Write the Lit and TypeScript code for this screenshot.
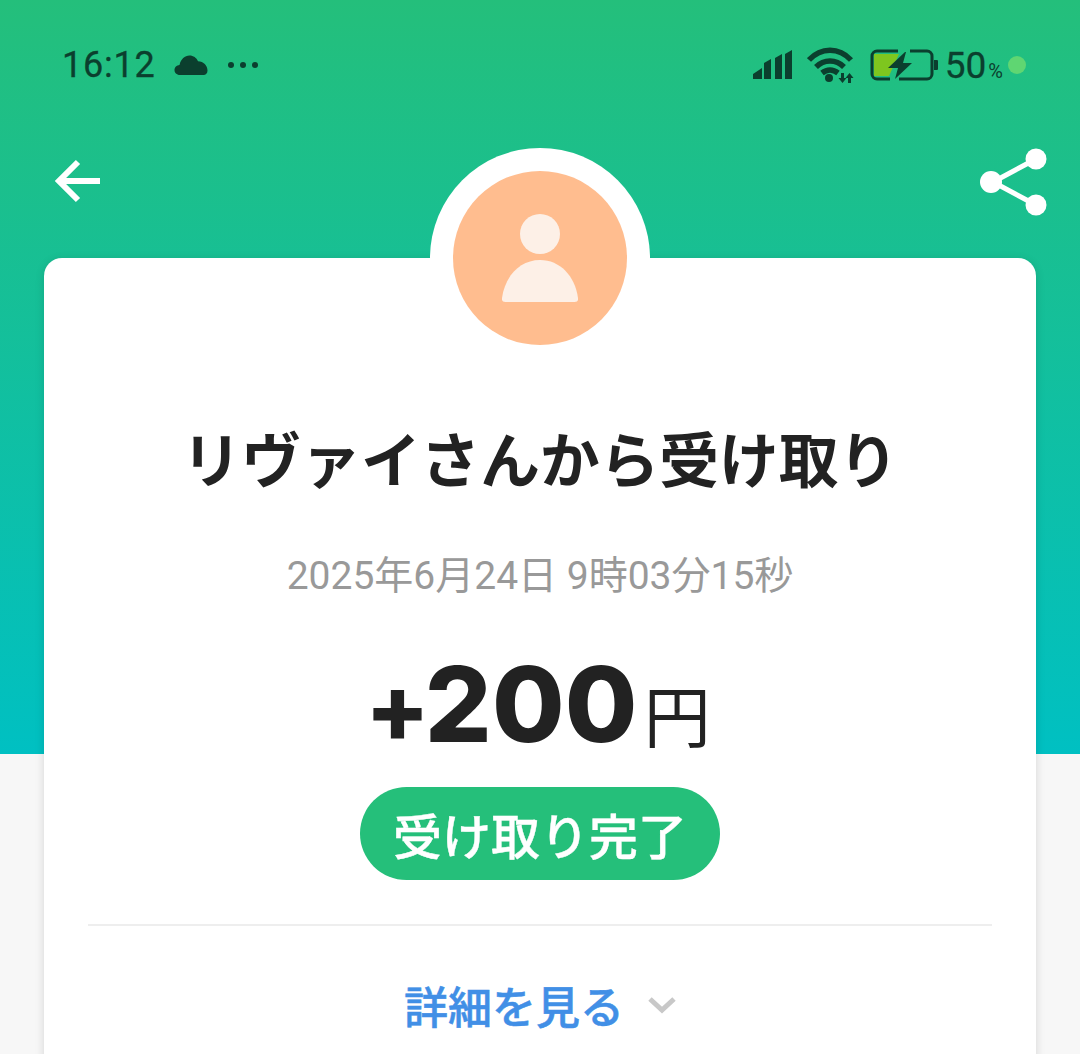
import { LitElement, html, css, svg } from "lit";
import { customElement } from "lit/decorators.js";

const DARK = "#0b3f2e";

@customElement("status-bar")
class StatusBar extends LitElement {
  static styles = css`
    :host { display: flex; align-items: center; height: 130px; padding: 0 54px 0 62px; box-sizing: border-box; color: #0b3f2e; font-family: Roboto, "Liberation Sans", sans-serif; }
    .time { font-size: 36px; letter-spacing: 0.8px; line-height: 1; -webkit-text-stroke: 0.3px currentColor; }
    svg { display: block; flex: none; }
    .cloud { margin-left: 18px; }
    .dots { margin-left: 19px; }
    .spacer { flex: 1; }
    .wifi { margin-left: 14px; }
    .batt { margin-left: 15px; }
    .pct { margin-left: 7px; font-size: 37px; line-height: 1; display: flex; align-items: baseline; -webkit-text-stroke: 0.3px currentColor; }
    .pct small { font-size: 20px; margin-left: 2px; -webkit-text-stroke: 0; }
    .dot { width: 18px; height: 18px; border-radius: 50%; background: #5fd672; margin-left: 5px; }
  `;
  render() {
    return html`
      <span class="time">16:12</span>
      <svg class="cloud" width="34" height="20" viewBox="0 0 34 20"><path fill="${DARK}" d="M6 20C2.500 20 .5 17.600.5 15c0-2.800 2.200-4.900 5-5.100C6.800 4.200 10.800.5 15.500.5c3.900 0 7 2.200 8.500 5.800C29.500 6.300 33.500 10.800 33.500 15.500c0 2.800-1.700 4.500-4 4.500Z"/></svg>
      <svg class="dots" width="32" height="8" viewBox="0 0 32 8"><circle cx="4" cy="4" r="3" fill="${DARK}"/><circle cx="16" cy="4" r="3" fill="${DARK}"/><circle cx="28" cy="4" r="3" fill="${DARK}"/></svg>
      <span class="spacer"></span>
      <svg width="40" height="30" viewBox="0 0 40 30"><path fill="${DARK}" d="M0 29v-5l9-6v11ZM11 29V13l7-4v20ZM22 29V8l7-4v25ZM32 29V4l7-4v29Z"/></svg>
      <svg class="wifi" width="48" height="36" viewBox="0 0 48 36" fill="none" stroke="${DARK}" stroke-width="5.500"><path d="M2 13C14 0 32 0 44 13"/><path d="M9 20c8-8 20-8 28 0"/><path d="M15 26c5-4 11-4 16 0"/><circle cx="22" cy="31" r="4" fill="${DARK}" stroke="none"/><path stroke="none" fill="${DARK}" d="M34 26h3v5h2.500l-4 5-4-5H34ZM41 36h3v-5h2.500l-4-5-4 5H41Z"/></svg>
      <svg class="batt" width="68" height="32" viewBox="0 0 68 32"><path fill="#7ec61f" d="M4 5h25L19 27H4Z"/><path fill="none" stroke="${DARK}" stroke-width="3" d="M20 30H7a5 5 0 0 1-5-5V7a5 5 0 0 1 5-5h21M40 2h17a5 5 0 0 1 5 5v18a5 5 0 0 1-5 5H29"/><path fill="${DARK}" d="M35 3 18 19h10l-3 11 17-16h-9l3-11ZM64 11h3a1 1 0 0 1 1 1v8a1 1 0 0 1-1 1h-3Z"/></svg>
      <span class="pct">50<small>%</small></span>
      <span class="dot"></span>
    `;
  }
}

@customElement("app-root")
class AppRoot extends LitElement {
  static styles = css`
    :host { display: block; height: 1054px; overflow: hidden; background: linear-gradient(180deg, #24bf7b 0, #00c0c2 754px) top / 100% 754px no-repeat, #f7f7f7; font-family: "Noto Sans CJK JP", sans-serif; color: #222; }
    .nav { display: flex; justify-content: space-between; align-items: flex-start; padding: 18px 32px 0 54px; height: 128px; box-sizing: border-box; }
    .back { margin-top: 11px; }
    svg { display: block; flex: none; }
    .card { position: relative; margin: 0 44px; height: 900px; background: #fff; border-radius: 18px; box-shadow: 0 2px 10px rgba(0,0,0,.14); display: flex; flex-direction: column; align-items: center; }
    .ring { position: absolute; left: 386px; top: -110px; width: 220px; height: 110px; border-radius: 110px 110px 0 0; background: #fff; }
    .avatar { position: absolute; left: 409px; top: -87px; width: 174px; height: 174px; padding-top: 2px; box-sizing: border-box; border-radius: 50%; background: #ffbd8f; display: flex; align-items: center; justify-content: center; }
    .title { margin: 154px 0 0; font-size: 59.700px; line-height: 90px; font-weight: 700; white-space: nowrap; color: #222; }
    .date { margin-top: 46px; font-size: 39px; line-height: 56px; color: #999; font-family: Roboto, "Noto Sans CJK JP", sans-serif; white-space: nowrap; }
    .amount { margin-top: 42px; margin-right: 4px; display: flex; align-items: baseline; height: 116px; line-height: 116px; font-family: Inter, "Liberation Sans", sans-serif; font-weight: 800; color: #222; }
    .plus { font-size: 94px; letter-spacing: -5px; }
    .num { font-size: 105px; letter-spacing: 0.300px; }
    .yen { font-family: "Noto Sans CJK JP", sans-serif; font-size: 67px; margin-left: 6px; font-weight: 400; }
    .pill { margin-top: 25px; width: 360px; height: 93px; border-radius: 47px; background: #25bf7a; color: #fff; font-size: 49px; font-weight: 500; -webkit-text-stroke: 0.4px currentColor; display: flex; align-items: center; justify-content: center; white-space: nowrap; }
    .rule { margin-top: 44px; width: 904px; height: 2px; background: #eee; flex: none; }
    .more { margin-top: 49px; display: flex; align-items: center; gap: 24px; color: #418fe6; font-size: 44px; line-height: 60px; font-weight: 500; }
    .more span { -webkit-text-stroke: 0.5px currentColor; }
  `;
  render() {
    return html`
      <status-bar></status-bar>
      <div class="nav">
        <svg class="back" width="46" height="44" viewBox="0 0 46 44" fill="none" stroke="#fff" stroke-width="6"><path d="M46 22H5"/><path d="M24 3 5 22l19 19"/></svg>
        <svg width="68" height="68" viewBox="0 0 68 68"><path fill="none" stroke="#fff" stroke-width="5" d="M56 11 13 34l43 23"/><circle cx="56" cy="11" r="10.500" fill="#fff"/><circle cx="11" cy="34" r="11" fill="#fff"/><circle cx="56" cy="57" r="10.500" fill="#fff"/></svg>
      </div>
      <div class="card">
        <div class="ring"></div>
        <div class="avatar">
          <svg width="76" height="90" viewBox="0 0 76 90">${svg`<circle cx="38" cy="20" r="20" fill="#fdf0e7"/><path fill="#fdf0e7" d="M38 46C18 46 3 62 0 84c-.300 3 1 4 3.500 4h69c2.500 0 3.800-1 3.500-4C73 62 58 46 38 46Z"/>`}</svg>
        </div>
        <h1 class="title">リヴァイさんから受け取り</h1>
        <div class="date">2025年6月24日 9時03分15秒</div>
        <div class="amount"><span class="plus">+</span><span class="num">200</span><span class="yen">円</span></div>
        <div class="pill">受け取り完了</div>
        <div class="rule"></div>
        <div class="more">
          <span>詳細を見る</span>
          <svg width="28" height="18" viewBox="0 0 28 18" fill="none" stroke="#c8c8c8" stroke-width="5"><path d="M2 3l12 11L26 3"/></svg>
        </div>
      </div>
    `;
  }
}
